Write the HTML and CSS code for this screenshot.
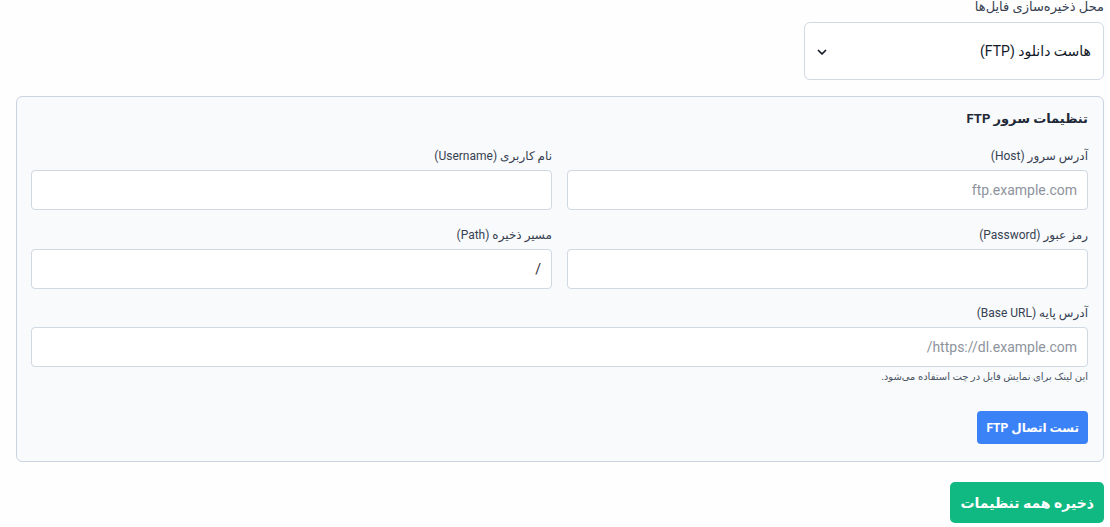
FILE: index.html
```html
<!DOCTYPE html>
<html lang="fa" dir="rtl">
<head>
    <meta charset="utf-8">
    <title>تنظیمات ذخیره‌سازی</title>
    <link rel="stylesheet" href="styles.css">
</head>
<body>
    <main class="settings">
        <div class="storage-field">
            <label class="field-label" for="storage">محل ذخیره‌سازی فایل‌ها</label>
            <div class="select-wrap">
                <select id="storage" class="select">
                    <option>هاست دانلود (FTP)</option>
                    <option>سرور محلی</option>
                </select>
                <svg class="chevron" width="10" height="10" viewBox="0 0 10 10" aria-hidden="true">
                    <path d="M1.5 3.5 L5 7 L8.5 3.5" fill="none" stroke="#111827" stroke-width="1.7" stroke-linecap="round" stroke-linejoin="round"/>
                </svg>
            </div>
        </div>

        <section class="panel">
            <h3 class="panel-title">تنظیمات سرور FTP</h3>
            <div class="grid">
                <div class="field">
                    <label class="field-label">آدرس سرور (Host)</label>
                    <input class="input" type="text" placeholder="ftp.example.com" dir="ltr">
                </div>
                <div class="field">
                    <label class="field-label">نام کاربری (Username)</label>
                    <input class="input" type="text">
                </div>
                <div class="field">
                    <label class="field-label">رمز عبور (Password)</label>
                    <input class="input" type="password">
                </div>
                <div class="field">
                    <label class="field-label">مسیر ذخیره (Path)</label>
                    <input class="input" type="text" value="/">
                </div>
                <div class="field wide">
                    <label class="field-label">آدرس پایه (Base URL)</label>
                    <input class="input" type="text" placeholder="https://dl.example.com/">
                    <p class="hint">این لینک برای نمایش فایل در چت استفاده می‌شود.</p>
                </div>
            </div>
            <button class="btn btn-blue" type="button">تست اتصال FTP</button>
        </section>

        <button class="btn btn-green" type="button">ذخیره همه تنظیمات</button>
    </main>
</body>
</html>
```

FILE: styles.css
```css
body {
    margin: 0;
    background-color: #fefefe;
    color: #1f2937;
    font-family: Roboto, "DejaVu Sans", sans-serif;
}
.settings {
    padding: 0 6px 0 16px;
}
.storage-field {
    width: 300px;
}
.field-label {
    display: block;
    font-size: 12px;
    line-height: 16px;
    color: #374151;
    margin-bottom: 6px;
}
.storage-field .field-label {
    font-size: 13px;
    line-height: 14px;
    margin-bottom: 8px;
}
.select-wrap {
    position: relative;
}
.select {
    -webkit-appearance: none;
    appearance: none;
    width: 100%;
    height: 58px;
    padding: 0 12px;
    border: 1px solid #d1d9e3;
    border-radius: 6px;
    background-color: #ffffff;
    color: #111827;
    font-family: inherit;
    font-size: 14px;
    box-sizing: border-box;
}
.chevron {
    position: absolute;
    left: 13px;
    top: 25px;
}
.panel {
    margin-top: 16px;
    padding: 13px 15px 17px 14px;
    background-color: #f8fafc;
    border: 1px solid #cbd5e1;
    border-radius: 6px;
}
.panel-title {
    margin: 0 0 20px;
    font-size: 13px;
    line-height: 18px;
    font-weight: bold;
    color: #1f2937;
}
.grid {
    display: grid;
    grid-template-columns: 1fr 1fr;
    column-gap: 15px;
    row-gap: 17px;
}
.wide {
    grid-column: 1 / -1;
    margin-top: -1px;
}
.input {
    display: block;
    width: 100%;
    height: 40px;
    padding: 0 10px;
    border: 1px solid #cfd8e3;
    border-radius: 4px;
    background-color: #ffffff;
    color: #1f2937;
    font-family: inherit;
    font-size: 14px;
    box-sizing: border-box;
}
.input::placeholder {
    color: #8d939c;
}
.input[dir="ltr"] {
    text-align: right;
}
.hint {
    margin: 3px 0 0;
    font-size: 10px;
    line-height: 14px;
    color: #4b5563;
}
.btn {
    display: block;
    border: none;
    color: #ffffff;
    font-family: inherit;
    font-weight: bold;
    cursor: pointer;
}
.btn-blue {
    margin-top: 27px;
    height: 33px;
    padding: 0 9px;
    border-radius: 4px;
    background-color: #3b82f6;
    font-size: 12px;
}
.btn-green {
    margin-top: 20px;
    height: 41px;
    padding: 0 10px;
    border-radius: 5px;
    background-color: #10b981;
    font-size: 14px;
}
```
